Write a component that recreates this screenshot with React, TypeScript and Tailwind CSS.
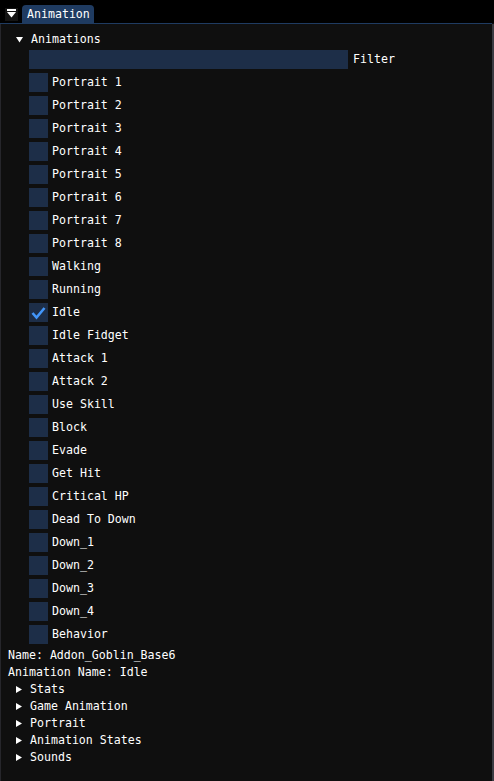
import React from "react";

const items = [
  "Portrait 1","Portrait 2","Portrait 3","Portrait 4","Portrait 5","Portrait 6","Portrait 7","Portrait 8",
  "Walking","Running","Idle","Idle Fidget","Attack 1","Attack 2","Use Skill","Block","Evade","Get Hit",
  "Critical HP","Dead To Down","Down_1","Down_2","Down_3","Down_4","Behavior",
];

const font = { fontFamily: '"DejaVu Sans Mono", "Liberation Mono", monospace' };

function DownArrow() {
  return (
    <svg width="7" height="7" viewBox="0 0 7 7" className="shrink-0">
      <polygon points="0,1 7,1 3.5,6.5" fill="#ffffff" />
    </svg>
  );
}
function RightArrow() {
  return (
    <svg width="6" height="7" viewBox="0 0 6 7" className="shrink-0">
      <polygon points="0,0 6,3.5 0,7" fill="#ffffff" />
    </svg>
  );
}

function Checkbox({ label, checked }: { label: string; checked?: boolean }) {
  return (
    <div className="flex items-center h-[19px]">
      <div className="w-[19px] h-[19px] bg-[#1d2e48] shrink-0 flex items-center justify-center">
        {checked && (
          <svg width="19" height="19" viewBox="0 0 19 19">
            <polyline points="3.5,10 7.5,14.5 15.5,5" fill="none" stroke="#4296fa" strokeWidth="2.6" strokeLinejoin="miter" />
          </svg>
        )}
      </div>
      <span className="ml-[4px] leading-[13px] whitespace-pre">{label}</span>
    </div>
  );
}

function TreeNode({ label }: { label: string }) {
  return (
    <div className="flex items-center h-[13px] pl-[8px]">
      <RightArrow />
      <span className="ml-[8px] leading-[13px] whitespace-pre">{label}</span>
    </div>
  );
}

export default function App() {
  return (
    <div className="w-[494px] h-[781px] bg-[#0f0f0f] text-white text-[11.6px] flex flex-col overflow-hidden" style={font}>
      {/* title / tab bar */}
      <div className="h-[23px] bg-[#000000] flex items-end shrink-0 relative">
        <div className="absolute left-[5px] top-[8px] w-[13px] h-[13px] bg-[#141414] flex flex-col items-center pt-[1px]">
          <div className="w-[9px] h-[2px] bg-white" />
          <svg width="9" height="6" viewBox="0 0 9 6" className="mt-[1px]">
            <polygon points="0,0 9,0 4.5,5.5" fill="#ffffff" />
          </svg>
        </div>
        <div className="ml-[22px] w-[72px] h-[18px] bg-[#1f3b61] rounded-t-[4px] flex items-center pl-[5px] pt-[1px] leading-[13px]">
          Animation
        </div>
      </div>
      <div className="h-[1px] bg-[#1f3b61] mr-[2px] shrink-0" />
      {/* window content */}
      <div className="flex-1 flex flex-col border-l border-[#26262b] border-r-2 border-r-[#3b3b42] pt-[9px] pl-[7px] gap-[4px]">
        <div className="flex items-center h-[13px] pl-[8px]">
          <DownArrow />
          <span className="ml-[8px] leading-[13px]">Animations</span>
        </div>
        <div className="flex flex-col gap-[4px] pl-[21px]">
          <div className="flex items-center h-[19px]">
            <div className="w-[319px] h-[19px] bg-[#1d2e48]" />
            <span className="ml-[5px] leading-[13px]">Filter</span>
          </div>
          {items.map((it) => (
            <Checkbox key={it} label={it} checked={it === "Idle"} />
          ))}
        </div>
        <div className="h-[13px] leading-[13px] mt-[1px]">Name: Addon_Goblin_Base6</div>
        <div className="h-[13px] leading-[13px]">Animation Name: Idle</div>
        <TreeNode label="Stats" />
        <TreeNode label="Game Animation" />
        <TreeNode label="Portrait" />
        <TreeNode label="Animation States" />
        <TreeNode label="Sounds" />
      </div>
    </div>
  );
}
